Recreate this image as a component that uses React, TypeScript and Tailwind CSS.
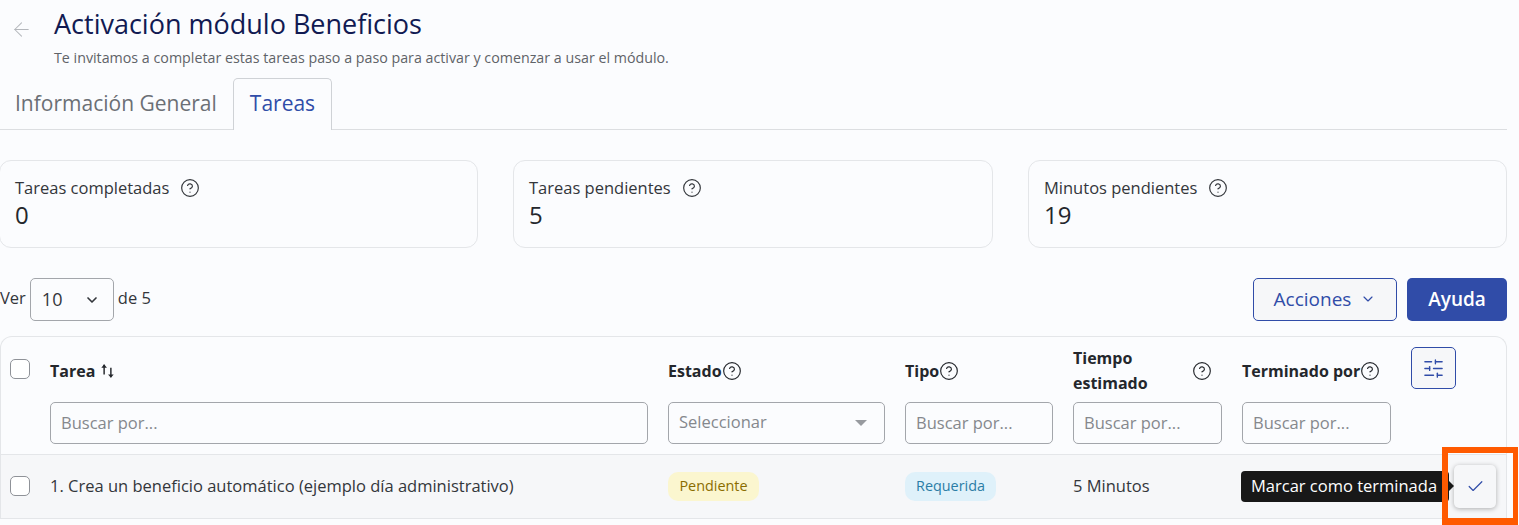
import { ArrowLeft, Check, ChevronDown, CircleHelp, SlidersHorizontal } from 'lucide-react';

const stats = [
  { label: 'Tareas completadas', value: '0' },
  { label: 'Tareas pendientes', value: '5' },
  { label: 'Minutos pendientes', value: '19' },
];

const rowGrid = 'grid grid-cols-[20px_598px_217px_148px_149px_149px_1fr] gap-x-5 pl-[9px]';

function SearchInput() {
  return (
    <div className="flex h-[42px] items-center rounded-[5px] border border-[#a3a6ab] pl-[10px] text-[16.5px] text-[#85888d]">
      Buscar por...
    </div>
  );
}

function Checkbox({ className }: { className: string }) {
  return <div className={`h-5 w-5 rounded-[5px] border border-[#8f9298] bg-white ${className}`} />;
}

function HeaderCell({ children }: { children: React.ReactNode }) {
  return (
    <div className="flex h-[65px] items-center pt-[3px] text-[16px] font-bold text-[#24272c]">
      {children}
      <CircleHelp size={20} strokeWidth={1.4} />
    </div>
  );
}

function SortIcon() {
  return (
    <svg width="17" height="18" viewBox="0 0 15 16" fill="none" stroke="currentColor" strokeWidth="1.3">
      <path d="M4.5 11V2.5" />
      <path d="M2 5l2.5-3L7 5" fill="currentColor" stroke="none" />
      <path d="M10.5 5v8.5" />
      <path d="M8 11l2.5 3L13 11" fill="currentColor" stroke="none" />
    </svg>
  );
}

export default function App() {
  return (
    <div className="relative h-[525px] w-[1519px] overflow-hidden bg-[#fbfcfe] pr-3 font-['Open_Sans',sans-serif] text-[#24272c]">
      {/* Header */}
      <div className="flex h-[78px] pl-[10px]">
        <ArrowLeft size={23} strokeWidth={1.1} className="mt-[18px] text-[#b4b7bc]" />
        <div className="ml-[21px]">
          <h1 className="mt-[7px] text-[27px] leading-[34px] font-normal text-[#111a52]">Activación módulo Beneficios</h1>
          <p className="mt-[7px] text-[14.25px] leading-5 text-[#5f6368]">
            Te invitamos a completar estas tareas paso a paso para activar y comenzar a usar el módulo.
          </p>
        </div>
      </div>

      {/* Tabs */}
      <div className="flex h-[52px] items-stretch border-b border-[#dcdee1]">
        <div className="flex w-[233px] items-center pl-[15px] text-[21px] text-[#6b6f75]">Información General</div>
        <div className="-mb-px flex w-[99px] items-center justify-center rounded-t-[5px] border border-b-0 border-[#cfd2d6] bg-[#fbfcfe] pb-[1px] text-[21px] text-[#304ca8]">
          Tareas
        </div>
      </div>

      {/* Stats */}
      <div className="mt-[30px] -ml-px grid grid-cols-[479px_480px_479px] gap-[35px]">
        {stats.map((stat) => (
          <div key={stat.label} className="h-[88px] rounded-xl border border-[#e4e6e9] px-[15px] pt-[15px]">
            <div className="flex items-center gap-[11px] text-[16.5px] leading-6 text-[#33363b]">
              {stat.label}
              <CircleHelp size={20} strokeWidth={1.4} />
            </div>
            <div className="text-[24px] leading-[30px] text-[#24272c]">{stat.value}</div>
          </div>
        ))}
      </div>

      {/* Toolbar */}
      <div className="mt-[30px] flex h-[43px] items-center justify-between">
        <div className="flex items-center text-[16.5px] text-[#33363b]">
          <span className="pb-[3px]">Ver</span>
          <div className="mx-[4px] flex h-[43px] w-[84px] items-center justify-between rounded-[5px] border border-[#a3a6ab] pr-[13px] pl-[11px] text-[18px]">
            10
            <ChevronDown size={16} strokeWidth={2.5} />
          </div>
          <span className="pb-[3px]">de 5</span>
        </div>
        <div className="flex gap-[10px]">
          <div className="flex h-[43px] w-[144px] items-center justify-center gap-[9px] rounded-[5px] border border-[#304ca8] bg-[#f6f7f9] pb-[1px] text-[19px] font-medium text-[#304ca8]">
            Acciones
            <ChevronDown size={16} strokeWidth={1.75} />
          </div>
          <div className="flex h-[43px] w-[100px] items-center justify-center rounded-[5px] bg-[#304ca8] text-[19px] font-semibold text-white">
            Ayuda
          </div>
        </div>
      </div>

      {/* Table */}
      <div className="mt-[15px] rounded-t-xl border border-b-0 border-[#e4e6e9]">
        <div className={`${rowGrid} h-[118px] border-b border-[#e4e6e9]`}>
          <Checkbox className="mt-[22px]" />
          <div>
            <div className="flex h-[65px] items-center gap-[4px] pt-[3px] text-[16px] font-bold text-[#24272c]">
              Tarea
              <SortIcon />
            </div>
            <SearchInput />
          </div>
          <div>
            <HeaderCell>Estado</HeaderCell>
            <div className="flex h-[42px] items-center justify-between rounded-[5px] border border-[#a3a6ab] pr-[17px] pb-[2px] pl-[10px] text-[16.5px] text-[#85888d]">
              Seleccionar
              <div className="mt-[2px] h-0 w-0 border-x-[6px] border-t-[6px] border-x-transparent border-t-[#979a9f]" />
            </div>
          </div>
          <div>
            <HeaderCell>Tipo</HeaderCell>
            <SearchInput />
          </div>
          <div>
            <div className="flex h-[65px] items-center justify-between pt-[3px] pr-[10px] text-[16px] leading-[25px] font-bold text-[#24272c]">
              <span>
                Tiempo
                <br />
                estimado
              </span>
              <CircleHelp size={20} strokeWidth={1.4} />
            </div>
            <SearchInput />
          </div>
          <div>
            <HeaderCell>Terminado por</HeaderCell>
            <SearchInput />
          </div>
          <div className="pt-[10px]">
            <div className="flex h-[42px] w-[45px] items-center justify-center rounded-[5px] border border-[#304ca8] bg-[#f6f7f9] text-[#304ca8]">
              <SlidersHorizontal size={23} strokeWidth={1.4} />
            </div>
          </div>
        </div>

        <div className={`${rowGrid} h-[64px] items-center border-b border-[#e4e6e9] bg-[#f6f7f9]`}>
          <Checkbox className="-mt-[2px]" />
          <div className="pb-[1px] text-[16.5px] text-[#33363b]">1. Crea un beneficio automático (ejemplo día administrativo)</div>
          <div>
            <span className="inline-flex h-[29px] w-[91px] items-center justify-center rounded-[10px] bg-[#fbf6cf] pb-[2px] text-[14.4px] text-[#8a6d00]">
              Pendiente
            </span>
          </div>
          <div>
            <span className="inline-flex h-[29px] w-[91px] items-center justify-center rounded-[10px] bg-[#dff1fa] pb-[2px] text-[14.4px] text-[#2b7da6]">
              Requerida
            </span>
          </div>
          <div className="pb-[1px] text-[16.5px] text-[#33363b]">5 Minutos</div>
        </div>
      </div>

      {/* Tooltip over the row */}
      <div className="absolute top-[471px] left-[1241px] flex h-[31px] w-[208px] items-center rounded-[4px] bg-[#181818] pl-[10px] text-[16.5px] whitespace-nowrap text-white">
        Marcar como terminada
      </div>

      {/* Row action */}
      <div className="absolute top-[465px] left-[1454px] flex h-[43px] w-[42px] items-center justify-center rounded-[5px] bg-[#f6f7f9] text-[#304ca8] shadow-[0_1px_5px_rgba(0,0,0,0.3)]">
        <Check size={19} strokeWidth={1.5} />
      </div>

      {/* Highlight */}
      <div className="absolute top-[447px] left-[1442px] h-[78px] w-[76px] border-[6px] border-r-[5px] border-b-[7px] border-[#ff5a00]" />
      <div className="absolute top-[480px] left-[1448px] h-0 w-0 border-y-[6px] border-l-[6px] border-y-transparent border-l-[#181818]" />
    </div>
  );
}
